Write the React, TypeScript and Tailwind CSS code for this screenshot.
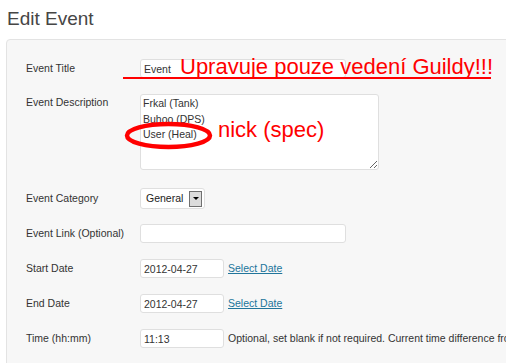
import React from "react";

const labelCls = "w-[114px] shrink-0 text-[10.5px] text-[#333]";
const inputCls =
  "h-[19px] rounded-[3px] border border-[#dfdfdf] bg-white px-[3px] text-[10.5px] text-[#333] outline-none";

function DateRow({ label, value, top }: { label: string; value: string; top: string }) {
  return (
    <div className={`flex items-center ${top}`}>
      <span className={labelCls}>{label}</span>
      <input className={`${inputCls} w-[84px]`} defaultValue={value} readOnly />
      <a href="#" className="ml-[4px] text-[10.5px] text-[#21759b] underline">
        Select Date
      </a>
    </div>
  );
}

export default function App(): JSX.Element {
  return (
    <div className="relative h-[363px] w-[506px] overflow-hidden bg-white font-['Liberation_Sans',Arial,sans-serif]">
      <h2 className="pl-[7px] pt-[7px] text-[19px] leading-[24px] text-[#464646]">Edit Event</h2>

      <div className="ml-[6px] mt-[8px] w-[560px] rounded-tl-[4px] border border-[#e3e3e3] bg-[#f7f7f7] pl-[19px] pt-[19px] pb-[40px]">
        <div className="relative flex items-center">
          <span className={labelCls}>Event Title</span>
          <input className={`${inputCls} w-[206px]`} defaultValue="Event" readOnly />
          <span className="absolute left-[154px] top-[-4px] whitespace-nowrap text-[22px] leading-[24px] text-[#ff0000]">
            Upravuje pouze vedení Guildy!!!
          </span>
          <div className="absolute left-[97px] top-[18px] h-[2px] w-[368px] bg-[#ff0000]" />
        </div>

        <div className="relative mt-[16px] flex items-start">
          <span className={`${labelCls} pt-[1px]`}>Event Description</span>
          <textarea
            className="h-[76px] w-[239px] rounded-[3px] border border-[#dfdfdf] bg-white px-[2px] py-[1px] text-[10.5px] leading-[15.5px] text-[#333] outline-none"
            defaultValue={"Frkal (Tank)\nBuhoo (DPS)\nUser (Heal)"}
            readOnly
          />
          <svg
            className="pointer-events-none absolute left-[98px] top-[27px]"
            width="90"
            height="30"
            viewBox="0 0 90 30"
          >
            <ellipse cx="44.5" cy="14.5" rx="41.5" ry="11.5" fill="none" stroke="#ff0000" strokeWidth="4.5" />
          </svg>
          <span className="absolute left-[192px] top-[24px] whitespace-nowrap text-[22px] leading-[24px] text-[#ff0000]">
            nick (spec)
          </span>
        </div>

        <div className="mt-[18px] flex items-center">
          <span className={labelCls}>Event Category</span>
          <div className="flex h-[21px] w-[65px] items-center rounded-[3px] border border-[#dfdfdf] bg-white pl-[5px] pr-[2px]">
            <span className="flex-1 text-[10.5px] text-[#222]">General</span>
            <span className="flex h-[16px] w-[13px] items-center justify-center border border-[#707070] bg-[#dcdcdc]">
              <span className="h-0 w-0 border-x-[3px] border-t-[3px] border-x-transparent border-t-black" />
            </span>
          </div>
        </div>

        <div className="mt-[15px] flex items-center">
          <span className={labelCls}>Event Link (Optional)</span>
          <input className={`${inputCls} w-[206px]`} defaultValue="" readOnly />
        </div>

        <DateRow label="Start Date" value="2012-04-27" top="mt-[16px]" />
        <DateRow label="End Date" value="2012-04-27" top="mt-[16px]" />

        <div className="mt-[16px] flex items-center whitespace-nowrap">
          <span className={labelCls}>Time (hh:mm)</span>
          <input className={`${inputCls} w-[84px]`} defaultValue="11:13" readOnly />
          <span className="ml-[4px] text-[10.5px] text-[#333]">
            Optional, set blank if not required. Current time difference from UTC is +2 hours.
          </span>
        </div>
      </div>
    </div>
  );
}
